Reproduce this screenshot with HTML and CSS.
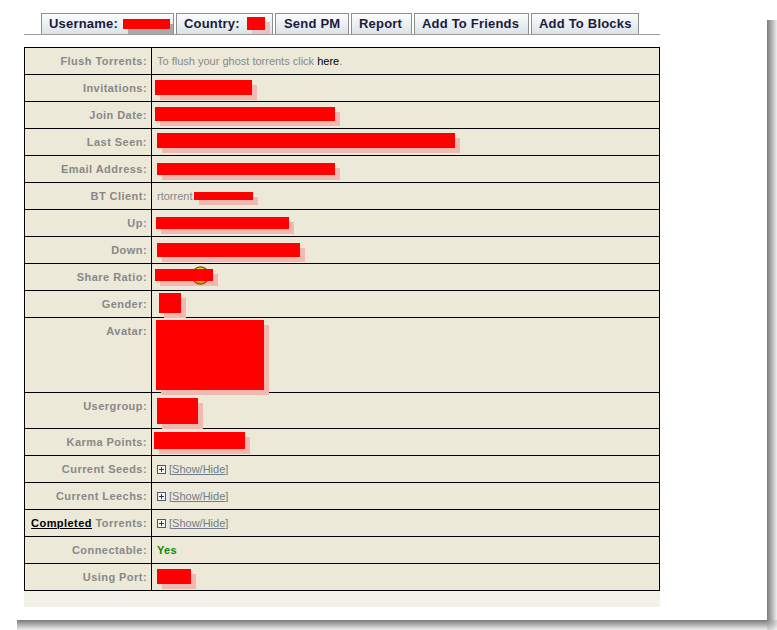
FILE: index.html
```html
<!DOCTYPE html>
<html>
<head>
<meta charset="utf-8">
<title>User details</title>
<link rel="stylesheet" href="styles.css">
</head>
<body>
<div class="frame">
  <div class="sheet">
    <div class="tabs">
      <div class="tab tab-user">Username: <span class="tab-redact r-user"></span></div>
      <div class="tab tab-country">Country: <span class="tab-redact r-country"></span></div>
      <div class="tab tab-pm">Send PM</div>
      <div class="tab tab-report">Report</div>
      <div class="tab tab-friends">Add To Friends</div>
      <div class="tab tab-blocks">Add To Blocks</div>
    </div>

    <div class="profile">
      <div class="lbl">Flush Torrents:</div>
      <div class="val text">To flush your ghost torrents click <a class="dark" href="#">here</a>.</div>

      <div class="lbl">Invitations:</div>
      <div class="val"><span class="redact r-inv"></span></div>

      <div class="lbl">Join Date:</div>
      <div class="val"><span class="redact r-join"></span></div>

      <div class="lbl">Last Seen:</div>
      <div class="val"><span class="redact r-last"></span></div>

      <div class="lbl">Email Address:</div>
      <div class="val"><span class="redact r-email"></span></div>

      <div class="lbl">BT Client:</div>
      <div class="val text">rtorrent<span class="redact r-bt"></span></div>

      <div class="lbl">Up:</div>
      <div class="val"><span class="redact r-up"></span></div>

      <div class="lbl">Down:</div>
      <div class="val"><span class="redact r-down"></span></div>

      <div class="lbl">Share Ratio:</div>
      <div class="val">
        <span class="ratio">
          <span class="ratio-shadow"></span>
          <svg class="smiley" width="19" height="19" viewBox="0 0 19 19">
            <defs>
              <radialGradient id="sg" cx="0.4" cy="0.35" r="0.7">
                <stop offset="0" stop-color="#ffe55a"/>
                <stop offset="0.6" stop-color="#f5b800"/>
                <stop offset="1" stop-color="#dd8a00"/>
              </radialGradient>
            </defs>
            <circle cx="9.5" cy="9.5" r="8.6" fill="url(#sg)" stroke="#6e4a10" stroke-width="1.2"/>
          </svg>
          <span class="ratio-red"></span>
        </span>
      </div>

      <div class="lbl">Gender:</div>
      <div class="val"><span class="redact r-gender"></span></div>

      <div class="lbl tall">Avatar:</div>
      <div class="val tall"><span class="redact r-avatar"></span></div>

      <div class="lbl mid">Usergroup:</div>
      <div class="val mid"><span class="redact r-group"></span></div>

      <div class="lbl">Karma Points:</div>
      <div class="val"><span class="redact r-karma"></span></div>

      <div class="lbl">Current Seeds:</div>
      <div class="val toggle"><svg class="plus" width="9" height="9" viewBox="0 0 9 9"><rect x="0.5" y="0.5" width="8" height="8" fill="#f4f4f4" stroke="#4b5a78"/><path d="M2 4.5H7M4.5 2V7" stroke="#2c3a58" stroke-width="1"/></svg><a class="showhide" href="#">[Show/Hide]</a></div>

      <div class="lbl">Current Leechs:</div>
      <div class="val toggle"><svg class="plus" width="9" height="9" viewBox="0 0 9 9"><rect x="0.5" y="0.5" width="8" height="8" fill="#f4f4f4" stroke="#4b5a78"/><path d="M2 4.5H7M4.5 2V7" stroke="#2c3a58" stroke-width="1"/></svg><a class="showhide" href="#">[Show/Hide]</a></div>

      <div class="lbl"><a class="completed" href="#">Completed</a> Torrents:</div>
      <div class="val toggle"><svg class="plus" width="9" height="9" viewBox="0 0 9 9"><rect x="0.5" y="0.5" width="8" height="8" fill="#f4f4f4" stroke="#4b5a78"/><path d="M2 4.5H7M4.5 2V7" stroke="#2c3a58" stroke-width="1"/></svg><a class="showhide" href="#">[Show/Hide]</a></div>

      <div class="lbl">Connectable:</div>
      <div class="val text"><span class="yes">Yes</span></div>

      <div class="lbl">Using Port:</div>
      <div class="val"><span class="redact r-port"></span></div>
    </div>
    <div class="foot"></div>
  </div>
  <div class="shadow-r"></div>
  <div class="shadow-b"></div>
  <div class="shadow-c"></div>
</div>
</body>
</html>
```
FILE: styles.css
```css
html, body {
  margin: 0;
  padding: 0;
  background: #ffffff;
}

body {
  font-family: "Liberation Sans", Arial, sans-serif;
}

.frame {
  display: grid;
  grid-template-columns: 767px 10px;
  grid-template-rows: 620px 10px;
}

.sheet {
  background: #ffffff;
  padding: 13px 0 0 24px;
}

.shadow-r {
  margin-top: 20px;
  background: linear-gradient(to right, #7a7a7a, #a8a8a8 40%, #eeeeee);
}

.shadow-b {
  margin-left: 17px;
  background: linear-gradient(to bottom, #7a7a7a, #a8a8a8 40%, #eeeeee);
}

.shadow-c {
  background: radial-gradient(circle at 0 0, #8a8a8a, #b8b8b8 45%, #f4f4f4 100%);
}

/* tabs */
.tabs {
  display: flex;
  gap: 2px;
  width: 636px;
  box-sizing: border-box;
  padding-left: 17px;
  border-bottom: 1px solid #9a9a9a;
}

.tab {
  height: 21px;
  box-sizing: border-box;
  flex: none;
  border: 1px solid #8e8e8e;
  border-bottom: 0;
  padding: 0 0 0 7px;
  background: linear-gradient(to bottom, #fcfcfc, #dbe3e8);
  color: #1a1a3c;
  font-weight: bold;
  font-size: 13px;
  line-height: 20px;
  letter-spacing: 0.2px;
  white-space: nowrap;
  overflow: hidden;
}

.tab-user    { width: 133px; }
.tab-country { width: 97px; }
.tab-pm      { width: 74px; padding-left: 8px; }
.tab-report  { width: 61px; }
.tab-friends { width: 115px; }
.tab-blocks  { width: 108px; }

.tab-redact {
  display: inline-block;
  background: #ff0000;
  vertical-align: -1px;
}

.r-user {
  margin-left: 1px;
  width: 47px;
  height: 10px;
  box-shadow: 5px 5px 0 #a9a9a9;
}

.r-country {
  margin-left: 3px;
  width: 18px;
  height: 13px;
  vertical-align: -2px;
  box-shadow: 5px 5px 0 #e8c4c4;
}

/* profile table */
.profile {
  margin-top: 12px;
  width: 636px;
  box-sizing: border-box;
  display: grid;
  grid-template-columns: 127px 508px;
  border-left: 1px solid #000;
  border-top: 1px solid #000;
  background: #ece9d8;
}

.lbl, .val {
  height: 27px;
  box-sizing: border-box;
  border-right: 1px solid #000;
  border-bottom: 1px solid #000;
  font-size: 11px;
  line-height: 13px;
  color: #888888;
}

.lbl {
  text-align: right;
  font-weight: bold;
  letter-spacing: 0.45px;
  padding: 7px 4px 0 0;
  white-space: nowrap;
}

.val {
  padding: 0;
}

.val.text {
  padding: 7px 5px 0;
}

.tall {
  height: 75px;
}

.mid {
  height: 36px;
}

a.dark {
  color: #000;
  text-decoration: none;
}

a.completed {
  color: #000;
  text-decoration: underline;
}

.yes {
  color: #0a8a0a;
  font-weight: bold;
  letter-spacing: 0.3px;
}

.toggle {
  display: flex;
  align-items: center;
  gap: 3px;
  padding: 0 0 0 5px;
}

.plus {
  display: block;
  flex: none;
}

.showhide {
  color: #727a8b;
  text-decoration: underline;
  font-size: 11px;
}

/* redactions */
.redact {
  display: block;
  background: #ff0000;
  box-shadow: 5px 5px 0 #f1b9b0;
}

.r-inv    { margin: 5px 0 0 3px; width: 97px;  height: 15px; }
.r-join   { margin: 5px 0 0 3px; width: 180px; height: 14px; }
.r-last   { margin: 4px 0 0 5px; width: 298px; height: 15px; }
.r-email  { margin: 7px 0 0 5px; width: 178px; height: 12px; }
.r-up     { margin: 7px 0 0 4px; width: 133px; height: 12px; }
.r-down   { margin: 6px 0 0 5px; width: 143px; height: 14px; }
.r-gender { margin: 2px 0 0 7px; width: 22px;  height: 20px; }
.r-avatar { margin: 2px 0 0 4px; width: 108px; height: 70px; }
.r-group  { margin: 5px 0 0 5px; width: 41px;  height: 26px; }
.r-karma  { margin: 3px 0 0 2px; width: 91px;  height: 17px; }
.r-port   { margin: 5px 0 0 5px; width: 34px;  height: 15px; }

.r-bt {
  display: inline-block;
  vertical-align: baseline;
  margin-left: 2px;
  width: 59px;
  height: 8px;
}

/* share ratio: shadow, smiley and red box stacked */
.ratio {
  display: inline-grid;
  margin: 2px 0 0 3px;
}

.ratio > * {
  grid-area: 1 / 1;
}

.ratio-shadow {
  display: block;
  margin: 8px 0 0 5px;
  width: 58px;
  height: 12px;
  background: #f1b9b0;
}

.smiley {
  display: block;
  margin-left: 36px;
}

.ratio-red {
  display: block;
  margin-top: 3px;
  width: 58px;
  height: 12px;
  background: #ff0000;
}

.foot {
  width: 636px;
  height: 16px;
  background: #f3f2e9;
}
```
